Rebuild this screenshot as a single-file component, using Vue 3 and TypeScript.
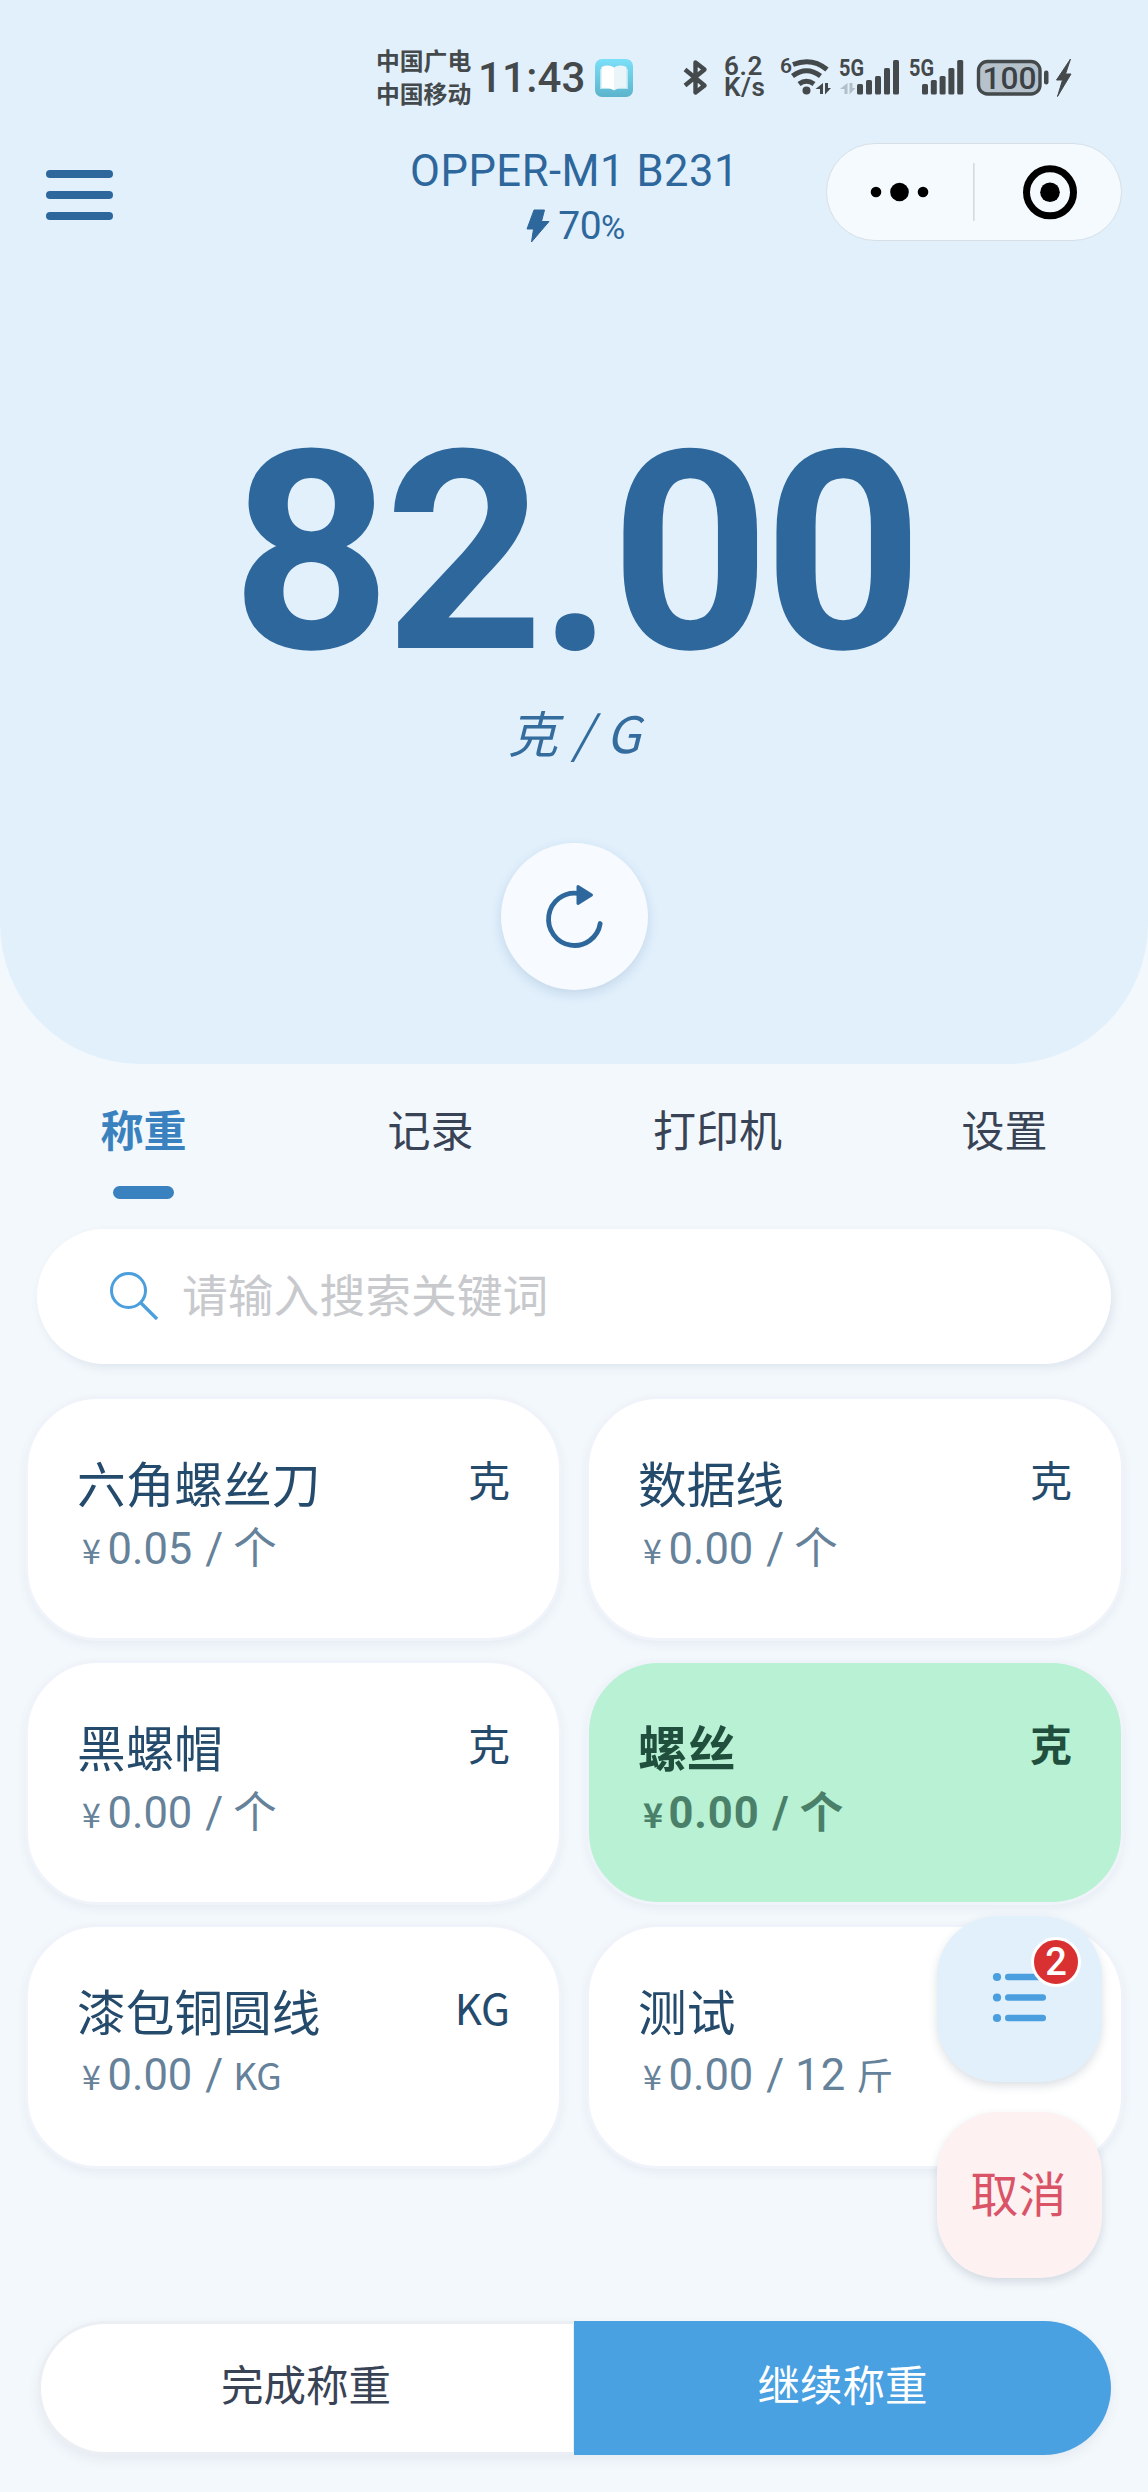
<script setup lang="ts">
interface Goods {
  name: string
  unit: string
  price: string
  count?: string
  per: string
  small?: boolean
}

const tabs: string[] = ['称重', '记录', '打印机', '设置']
const activeTab = 0
const selected = 3

const goods: Goods[] = [
  { name: '六角螺丝刀', unit: '克', price: '0.05', per: '个' },
  { name: '数据线', unit: '克', price: '0.00', per: '个' },
  { name: '黑螺帽', unit: '克', price: '0.00', per: '个' },
  { name: '螺丝', unit: '克', price: '0.00', per: '个' },
  { name: '漆包铜圆线', unit: 'KG', price: '0.00', per: 'KG', small: true },
  { name: '测试', unit: '', price: '0.00', count: '12', per: '斤', small: true },
]

const barTops: number[] = [84, 80, 76, 68, 60]
</script>

<template>
  <div class="page">
    <section class="hero">
      <div class="status">
        <div class="carrier"><span>中国广电</span><span>中国移动</span></div>
        <span class="time">11:43</span>
        <svg class="book" width="38" height="38" viewBox="0 0 38 38">
          <defs>
            <linearGradient id="bookBg" x1="0" y1="0" x2="0" y2="1">
              <stop offset="0" stop-color="#7be0f8" />
              <stop offset="1" stop-color="#5cb4cb" />
            </linearGradient>
          </defs>
          <rect width="38" height="38" rx="7" fill="url(#bookBg)" />
          <path d="M5 10H33V30H22L19 31.500L16 30H5Z" fill="#b9e6f0" />
          <path d="M6.500 8Q14 5 19 8.500V31Q14 28 6.500 29Z" fill="#fff" />
          <path d="M31.500 8Q24 5 19 8.500V31Q24 28 31.500 29Z" fill="#e9f5f8" />
        </svg>
        <svg class="bt" width="27" height="40" viewBox="682 58 27 40">
          <path d="M685 69.500L704.500 85.500L695.500 92.500V62.500L704.500 69.500L685 85.500" fill="none" stroke="#44494c" stroke-width="4.400" stroke-linejoin="round" stroke-linecap="butt" />
        </svg>
        <div class="speed"><span>6.2</span><span>K/s</span></div>
        <svg class="wifi" width="54" height="44" viewBox="778 54 54 44">
          <text x="780" y="73" class="tiny">6</text>
          <g fill="none" stroke="#44494c" stroke-width="5">
            <path d="M793 64.500Q812 57 827 69.500" />
            <path d="M792.500 76Q806.500 65.500 820.500 76" />
            <path d="M799 84Q806.500 78.500 814 84" />
          </g>
          <circle cx="806.500" cy="90.500" r="4" fill="#44494c" />
          <path d="M823 83V94H820V89H815.500ZM825 83H828V88H831L825 94.500Z" fill="#44494c" />
        </svg>
        <svg class="sig1" width="62" height="42" viewBox="839 56 62 42">
          <text x="839" y="76" class="five" textLength="25" lengthAdjust="spacingAndGlyphs">5G</text>
          <path d="M847.500 83V94H844.500V89H840ZM849.500 83H852.500V88H855.500L849.500 94.500Z" fill="#b3bfc8" />
          <rect v-for="(t, i) in barTops" :key="i" :x="857 + i * 9" :y="t" width="6" :height="94.500 - t" rx="1.500" fill="#44494c" />
        </svg>
        <svg class="sig2" width="56" height="42" viewBox="909 56 56 42">
          <text x="909" y="76" class="five" textLength="25" lengthAdjust="spacingAndGlyphs">5G</text>
          <rect v-for="(t, i) in barTops" :key="i" :x="922 + i * 8.800" :y="t" width="6" :height="94.500 - t" rx="1.500" fill="#44494c" />
        </svg>
        <svg class="battery" width="96" height="42" viewBox="976 56 96 42">
          <rect x="978.500" y="61.500" width="61.500" height="32.500" rx="9" fill="#b6c2cb" stroke="#44494c" stroke-width="3.400" />
          <text x="1009.500" y="89" text-anchor="middle" class="pct" textLength="54" lengthAdjust="spacingAndGlyphs">100</text>
          <rect x="1044" y="70.500" width="4.500" height="14" rx="2.200" fill="#44494c" />
          <path d="M1070.500 59L1056.500 80H1062.500L1057.500 96.500L1071 74H1065.500Z" fill="#44494c" stroke="#44494c" stroke-width="1" />
        </svg>
      </div>

      <header class="nav">
        <div class="menu"><i></i><i></i><i></i></div>
        <div class="device">
          <span class="title">OPPER-M1 B231</span>
          <span class="power">
            <svg width="24" height="34" viewBox="0 0 24 34">
              <path d="M8 1H18.500L15.500 12.500H23L5.500 33L7.500 20H1Z" fill="#2d679b" stroke="#2d679b" stroke-linejoin="round" />
            </svg>
            <span>70<small>%</small></span>
          </span>
        </div>
        <div class="capsule">
          <svg width="294" height="96" viewBox="827 144 294 96">
            <circle cx="876" cy="192" r="5.300" />
            <circle cx="899.500" cy="192" r="9.300" />
            <circle cx="923" cy="192" r="5.300" />
            <rect x="973" y="163" width="1.600" height="58" fill="#d5dade" />
            <circle cx="1050" cy="192.300" r="23.500" fill="none" stroke="#000" stroke-width="7" />
            <circle cx="1050" cy="192.300" r="9.800" />
          </svg>
        </div>
      </header>

      <div class="weight">82<b>.</b>00</div>
      <div class="g-unit">克 / G</div>
      <button class="refresh">
        <svg width="64" height="64" viewBox="542 884 64 64">
          <path d="M578 892.300A26 26.200 0 1 0 600.200 922.500" fill="none" stroke="#2d679b" stroke-width="4.800" stroke-linecap="round" />
          <path d="M578 885.500L591.500 894L578 902.500Z" fill="#2d679b" stroke="#2d679b" stroke-width="3" stroke-linejoin="round" />
        </svg>
      </button>
    </section>

    <nav class="tabs">
      <div v-for="(t, i) in tabs" :key="t" class="tab" :class="{ on: i === activeTab }">
        <span>{{ t }}</span>
        <i></i>
      </div>
    </nav>

    <div class="search">
      <svg width="50" height="50" viewBox="0 0 50 50">
        <circle cx="19.500" cy="19.500" r="17" fill="none" stroke="#4b9fdc" stroke-width="3" />
        <path d="M31.500 31.500L48 48" stroke="#4b9fdc" stroke-width="3.400" />
      </svg>
      <span>请输入搜索关键词</span>
    </div>

    <div class="grid">
      <div v-for="(g, i) in goods" :key="g.name" class="card" :class="{ picked: i === selected }">
        <div class="row">
          <span class="name">{{ g.name }}</span>
          <span class="unit">{{ g.unit }}</span>
        </div>
        <div class="price">
          <span class="yen">¥</span><span>{{ g.price }}</span><span class="slash">/</span><span v-if="g.count" class="count">{{ g.count }}</span><span class="per" :class="{ small: g.small }">{{ g.per }}</span>
        </div>
      </div>
    </div>

    <footer class="actions">
      <button class="done">完成称重</button>
      <button class="next">继续称重</button>
    </footer>

    <div class="floating">
      <button class="fab list">
        <svg width="54" height="52" viewBox="992 1971 54 52">
          <g fill="#4b9fdf">
            <g v-for="y in [1977, 1997.5, 2018]" :key="y">
              <circle cx="997" :cy="y" r="4.100" />
              <rect x="1005" :y="y - 3.200" width="41" height="6.400" rx="3.200" />
            </g>
          </g>
        </svg>
        <span class="badge">2</span>
      </button>
      <button class="fab cancel">取消</button>
    </div>
  </div>
</template>

<style>
body {
  margin: 0;
  background: #f3f8fc;
}
</style>

<style scoped>
.page {
  position: relative;
  width: 1148px;
  height: 2492px;
  overflow: hidden;
  background: #f3f8fc;
  font-family: 'Noto Sans CJK SC', sans-serif;
}
button {
  border: 0;
  padding: 0;
  font-family: inherit;
}
svg {
  display: block;
  flex: none;
  overflow: visible;
}
.hero {
  height: 1064px;
  background: #e2f0fc;
  border-radius: 0 0 140px 140px;
  display: flex;
  flex-direction: column;
  align-items: center;
  color: #2d679b;
}
.status {
  width: 1148px;
  height: 143px;
  box-sizing: border-box;
  padding: 41px 0 0 376px;
  display: flex;
  align-items: flex-start;
  color: #44494c;
}
.carrier {
  width: 96px;
  margin-top: 1.500px;
  display: flex;
  flex-direction: column;
  font-size: 23.800px;
  font-weight: 700;
  line-height: 33px;
}
.time {
  width: 107px;
  margin: 13px 0 0 6px;
  font: 500 42px/48px Roboto, sans-serif;
  letter-spacing: 0.2px;
}
.book { margin: 18px 0 0 10px; }
.bt { margin: 17px 0 0 49px; }
.speed {
  width: 50px;
  margin: 15px 0 0 15px;
  display: flex;
  flex-direction: column;
  font: 600 26px/21px Roboto, sans-serif;
  letter-spacing: 0.6px;
}
.wifi { margin: 13px 0 0 4px; }
.sig1 { margin: 15px 0 0 7px; }
.sig2 { margin: 15px 0 0 8px; }
.battery { margin: 15px 0 0 11px; }
.tiny { font: 600 21px Roboto, sans-serif; fill: #44494c; }
.five { font: 700 23px Roboto, sans-serif; fill: #44494c; }
.pct { font: 500 32px Roboto, sans-serif; fill: #3b4145; }
.nav {
  width: 1148px;
  height: 98px;
  display: grid;
  grid-template-columns: 322px 1fr 322px;
}
.menu {
  margin: 26.500px 0 0 46px;
  display: flex;
  flex-direction: column;
  gap: 12.500px;
}
.menu i {
  width: 67px;
  height: 8.500px;
  border-radius: 4px;
  background: #2d679b;
}
.device {
  display: flex;
  flex-direction: column;
  align-items: center;
}
.title {
  margin: 3px 0 0 1px;
  font: 400 43.500px/52px Roboto, sans-serif;
  letter-spacing: 0.550px;
  white-space: nowrap;
}
.power {
  margin: 3px 0 0 3px;
  display: flex;
  align-items: center;
  gap: 8px;
  font: 400 39px/50px Roboto, sans-serif;
  letter-spacing: -0.500px;
}
.power svg { margin-top: -3px; }
.power small { font-size: 33px; }
.capsule {
  box-sizing: border-box;
  width: 296px;
  height: 98px;
  border: 1.500px solid #d6dfe6;
  border-radius: 49px;
  background: #f5faff;
}
.weight {
  margin-top: 162px;
  height: 286px;
  font: 700 278px/300px Roboto, sans-serif;
  letter-spacing: -6.500px;
  white-space: nowrap;
}
.weight b {
  display: inline-block;
  width: 71px;
  padding-left: 2px;
  text-align: center;
  font: 700 226px/220px 'Noto Sans', sans-serif;
  letter-spacing: 0;
}
.g-unit {
  margin: 7px 0 0 2px;
  font-size: 50px;
  line-height: 70px;
  font-style: italic;
  opacity: 0.96;
  letter-spacing: 1.500px;
}
.refresh {
  margin-top: 77px;
  width: 147px;
  height: 147px;
  border-radius: 50%;
  background: #f7fbff;
  display: flex;
  align-items: center;
  justify-content: center;
  box-shadow: 0 4px 12px rgba(40, 80, 130, 0.16);
}
.tabs {
  height: 165px;
  display: grid;
  grid-template-columns: repeat(4, 1fr);
}
.tab {
  display: flex;
  flex-direction: column;
  align-items: center;
  color: #394356;
  font-size: 43px;
  line-height: 60px;
}
.tab span { margin-top: 34px; }
.tab.on { color: #3a82bf; font-weight: 700; }
.tab i { display: none; }
.tab.on i {
  display: block;
  width: 61px;
  height: 13px;
  margin-top: 28px;
  border-radius: 7px;
  background: #3a82bf;
}
.search {
  width: 1074px;
  height: 135px;
  margin-left: 37px;
  box-sizing: border-box;
  padding-left: 72px;
  border-radius: 68px;
  background: #fff;
  display: flex;
  align-items: center;
  gap: 23px;
  box-shadow: 3px 4px 10px rgba(60, 80, 120, 0.1);
  color: #c8c9cd;
  font-size: 45.800px;
  line-height: 60px;
}
.search svg { margin-top: -2px; }
.search span { margin-top: -8px; }
.grid {
  margin: 32px 0 0 25px;
  width: 1099px;
  display: grid;
  grid-template-columns: 537px 538px;
  column-gap: 24px;
  row-gap: 19px;
}
.card {
  box-sizing: border-box;
  height: 245px;
  padding: 53px 49px 0;
  border: 3px solid #f0f4fa;
  border-radius: 73px;
  background: #fff;
  color: #244a6c;
  box-shadow: 0 4px 10px rgba(60, 90, 130, 0.07);
}
.row {
  display: flex;
  justify-content: space-between;
  line-height: 60px;
}
.name { font-size: 48.700px; }
.unit { font-size: 42px; margin-top: -3px; }
.price {
  margin: 4px 0 0 5px;
  display: flex;
  align-items: baseline;
  font: 400 43.500px/64px Roboto, 'Noto Sans CJK SC', sans-serif;
  color: #65829a;
}
.yen {
  width: 25.500px;
  font-family: 'Noto Sans CJK SC', sans-serif;
  font-size: 34px;
  line-height: 50px;
}
.slash { margin: 0 10px 0 13px; }
.count { letter-spacing: 1px; margin: 0 10px 0 1px; }
.per { font-family: 'Noto Sans CJK SC', sans-serif; line-height: 60px; }
.per.small { font-size: 37px; }
.card.picked {
  background: #b8f1d3;
  color: #20503d;
  font-weight: 700;
}
.picked .price {
  color: #4a8069;
  font-weight: 700;
  letter-spacing: 0.900px;
}
.actions {
  width: 1073px;
  height: 134px;
  margin: 152px 0 0 38px;
  border-radius: 67px;
  display: flex;
  box-shadow: 0 5px 12px rgba(60, 80, 120, 0.08);
}
.actions button {
  box-sizing: border-box;
  font-size: 42.500px;
  line-height: 60px;
  padding-bottom: 10px;
}
.done {
  width: 536px;
  border: 3px solid #ebeef3;
  border-right-width: 1px;
  border-radius: 67px 0 0 67px;
  background: #fff;
  color: #394356;
}
.actions .done { padding-right: 2px; }
.next {
  flex: 1;
  border-radius: 0 67px 67px 0;
  background: #4aa1e2;
  color: #fff;
}
.floating {
  position: absolute;
  left: 937px;
  top: 1916px;
  display: flex;
  flex-direction: column;
  gap: 30px;
}
.fab {
  position: relative;
  width: 165px;
  height: 166px;
  border-radius: 61px;
  display: flex;
  align-items: center;
  justify-content: center;
  box-shadow: 0 4px 10px rgba(40, 60, 90, 0.16);
}
.list { background: #e2f0fc; }
.list svg { margin: -4px 0 0 -2px; }
.cancel {
  background: #fdf1f2;
  color: #da5468;
  font-size: 48px;
  line-height: 70px;
  box-sizing: border-box;
  padding: 0 2px 9px 0;
}
.badge {
  position: absolute;
  right: 21px;
  top: 21px;
  width: 44px;
  height: 44px;
  border: 3px solid #fff;
  border-radius: 50%;
  background: #d93132;
  color: #fff;
  text-align: center;
  font: 500 38px/44px Roboto, sans-serif;
}
</style>
